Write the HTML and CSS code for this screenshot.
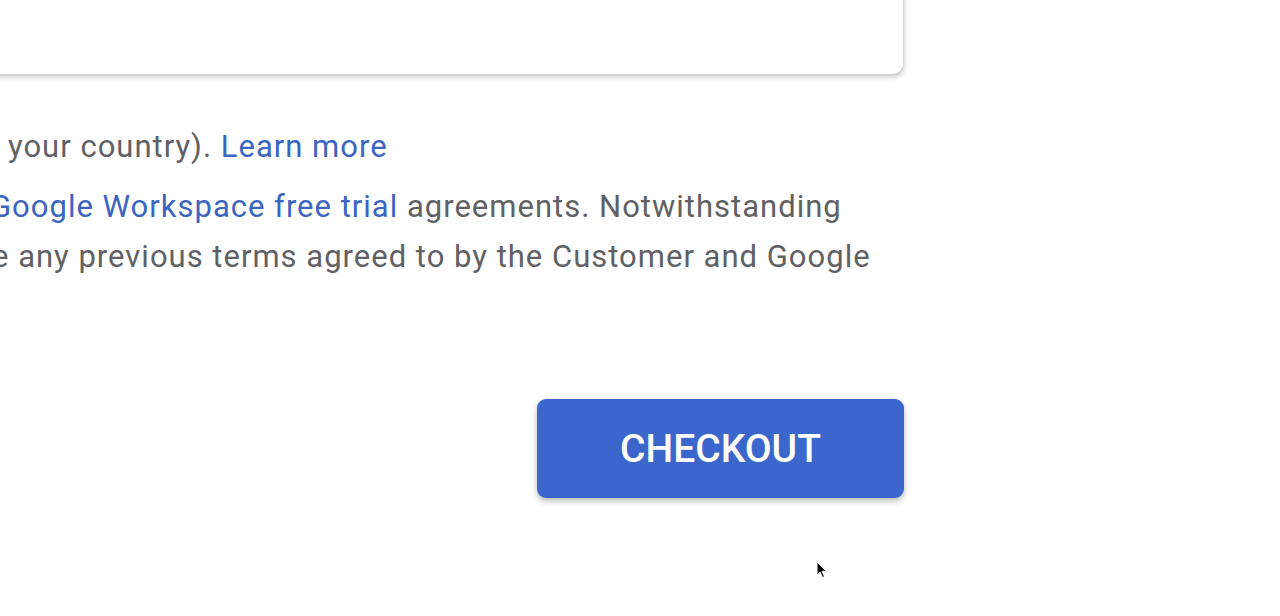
FILE: index.html
```html
<!DOCTYPE html>
<html lang="en">
<head>
<meta charset="utf-8">
<title>Checkout</title>
<link rel="stylesheet" href="styles.css">
</head>
<body>
<div class="main">
  <div class="card"></div>
  <div class="legal">
    <p class="para">
      <span class="line line-1">your country). <a class="link" href="#">Learn more</a></span>
    </p>
    <p class="para">
      <span class="line line-2"><a class="link" href="#">Google Workspace free trial</a> agreements. Notwithstanding</span>
      <span class="line line-3">e any previous terms agreed to by the Customer and Google</span>
    </p>
  </div>
  <div class="actions">
    <button class="checkout" type="button">CHECKOUT</button>
  </div>
</div>
<svg class="cursor" width="12" height="18" viewBox="0 0 12 18" aria-hidden="true">
  <path d="M1 1 L1 14 L4 11 L6.5 16.5 L8.5 15.6 L6 10.3 L10.3 10.3 Z" fill="#000" stroke="#fff" stroke-width="1"/>
</svg>
</body>
</html>
```

FILE: styles.css
```css
html, body {
  margin: 0;
  padding: 0;
  background: #ffffff;
  overflow: hidden;
  height: 616px;
}

body {
  font-family: Roboto, "Noto Sans", "Liberation Sans", sans-serif;
  position: relative;
}

.main {
  width: 1004px;
  margin-left: -100px;
  display: flex;
  flex-direction: column;
}

.card {
  height: 200px;
  margin-top: -124px;
  border: 1px solid #d4d4d4;
  border-bottom-width: 2px;
  border-radius: 12px;
  background: #fff;
  box-shadow: 1px 2px 4px rgba(0, 0, 0, 0.16);
  box-sizing: border-box;
}

.legal {
  margin-top: 46px;
  padding-left: 100px;
  color: #5f6164;
  font-size: 31px;
  letter-spacing: 1px;
  line-height: 50px;
}

.para {
  margin: 0 0 10px 0;
}

.para:last-child {
  margin-bottom: 0;
}

.line {
  display: block;
  white-space: nowrap;
}

.line-1 { text-indent: 8px; }
.line-2 { text-indent: -10px; }
.line-3 { text-indent: -8px; }

.link {
  color: #3b65c1;
  text-decoration: none;
}

.actions {
  display: flex;
  justify-content: flex-end;
  margin-top: 117px;
}

.checkout {
  width: 367px;
  height: 99px;
  border: none;
  border-radius: 9px;
  background: #3b67cc;
  color: #ffffff;
  font-family: Roboto, "Noto Sans", "Liberation Sans", sans-serif;
  font-size: 39px;
  font-weight: 500;
  letter-spacing: 0;
  box-shadow: 0 3px 6px rgba(0, 0, 0, 0.28);
  cursor: pointer;
}

.cursor {
  position: absolute;
  left: 816px;
  top: 561px;
}
```
